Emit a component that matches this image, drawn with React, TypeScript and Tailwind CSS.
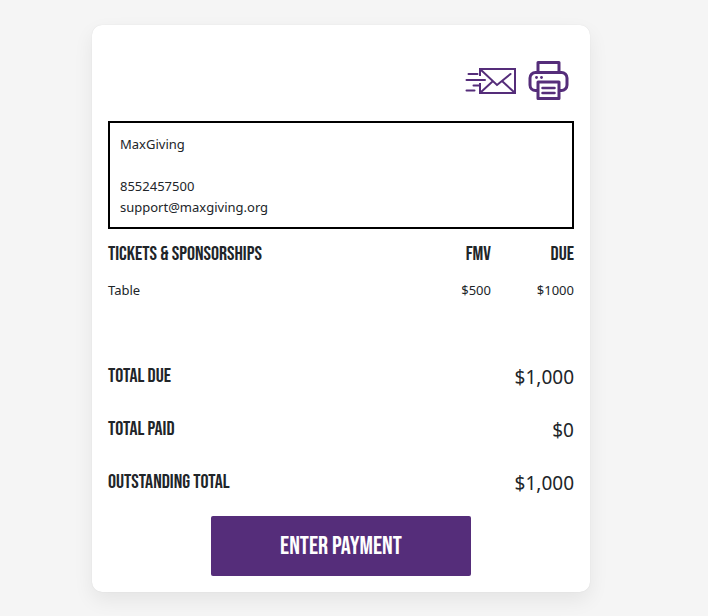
const heading = "font-['Bebas_Neue','Liberation_Sans_Narrow','Liberation_Sans',sans-serif]";

const totals = [
  { label: 'TOTAL DUE', amount: '$1,000' },
  { label: 'TOTAL PAID', amount: '$0' },
  { label: 'OUTSTANDING TOTAL', amount: '$1,000' },
];

function SendMailIcon() {
  return (
    <svg width="52" height="28" viewBox="0 0 52 28" fill="none" stroke="#552d7a" strokeWidth="2" strokeLinecap="round" aria-hidden="true">
      <path d="M16 9V2H51V26H16V16" strokeLinecap="butt" />
      <path d="M16.500 2.500 33 18 46.500 7M16.500 25.500l12-11M50.500 25.500 38 14" />
      <path d="M4.500 7h9M2.500 13h18.500M9.500 18.500h6M2.500 23.500h8" />
    </svg>
  );
}

function PrinterIcon() {
  return (
    <svg width="41" height="41" viewBox="0 0 41 41" fill="none" stroke="#552d7a" strokeWidth="3" strokeLinejoin="round" aria-hidden="true">
      <path d="M10 12V2.500h21V12" />
      <path d="M10 30.500H7.500A5.500 5.500 0 0 1 2 25V18A5.500 5.500 0 0 1 7.500 12.500H33.500a5.500 5.500 0 0 1 5.500 5.500V25A5.500 5.500 0 0 1 33.500 30.500H31" />
      <path d="M10 22h21V38.500H10z" />
      <path d="M14.500 28h12M14.500 33h12" strokeWidth="2.500" strokeLinecap="round" />
      <circle cx="8.500" cy="17.500" r="1.400" fill="#552d7a" stroke="none" />
      <circle cx="13.500" cy="17.500" r="1.400" fill="#552d7a" stroke="none" />
    </svg>
  );
}

export default function App() {
  return (
    <main className="min-h-screen bg-[#f5f5f5] pt-[25px] pr-[118px] pb-6 pl-[92px] font-['Segoe_UI','Noto_Sans',sans-serif] text-[13px] leading-[21px] text-[#212529]">
      <section className="rounded-[10px] bg-white p-4 shadow-[0_8px_20px_rgba(0,0,0,0.07),0_0_1px_rgba(0,0,0,0.12)]">
        <div className="flex items-center justify-end gap-3 pt-[19px] pr-[5px] pb-5">
          <button type="button" aria-label="Email receipt"><SendMailIcon /></button>
          <button type="button" aria-label="Print receipt"><PrinterIcon /></button>
        </div>

        <address className="border-2 border-black px-[10px] pt-[11px] pb-[9px] not-italic">
          <p>MaxGiving</p>
          <p className="pt-[21px]">8552457500</p>
          <p>support@maxgiving.org</p>
        </address>

        <table className="mt-3 w-full">
          <thead>
            <tr className={`${heading} text-xl leading-[26px]`}>
              <th scope="col" className="pb-[13px] text-left font-medium">TICKETS &amp; SPONSORSHIPS</th>
              <th scope="col" className="w-20 pb-[13px] text-right font-medium">FMV</th>
              <th scope="col" className="w-[83px] pb-[13px] text-right font-medium">DUE</th>
            </tr>
          </thead>
          <tbody>
            <tr>
              <td>Table</td>
              <td className="text-right">$500</td>
              <td className="text-right">$1000</td>
            </tr>
          </tbody>
        </table>

        <dl className="mt-[61px] flex flex-col gap-[23px]">
          {totals.map((row) => (
            <div key={row.label} className="flex justify-between">
              <dt className={`${heading} text-xl leading-7 font-medium`}>{row.label}</dt>
              <dd className="text-[19px] leading-[30px]">{row.amount}</dd>
            </div>
          ))}
        </dl>

        <button type="button" className={`${heading} mx-auto mt-[18px] block h-[60px] w-[260px] rounded-xs bg-[#552d7a] text-[25px] font-medium text-white`}>
          ENTER PAYMENT
        </button>
      </section>
    </main>
  );
}
